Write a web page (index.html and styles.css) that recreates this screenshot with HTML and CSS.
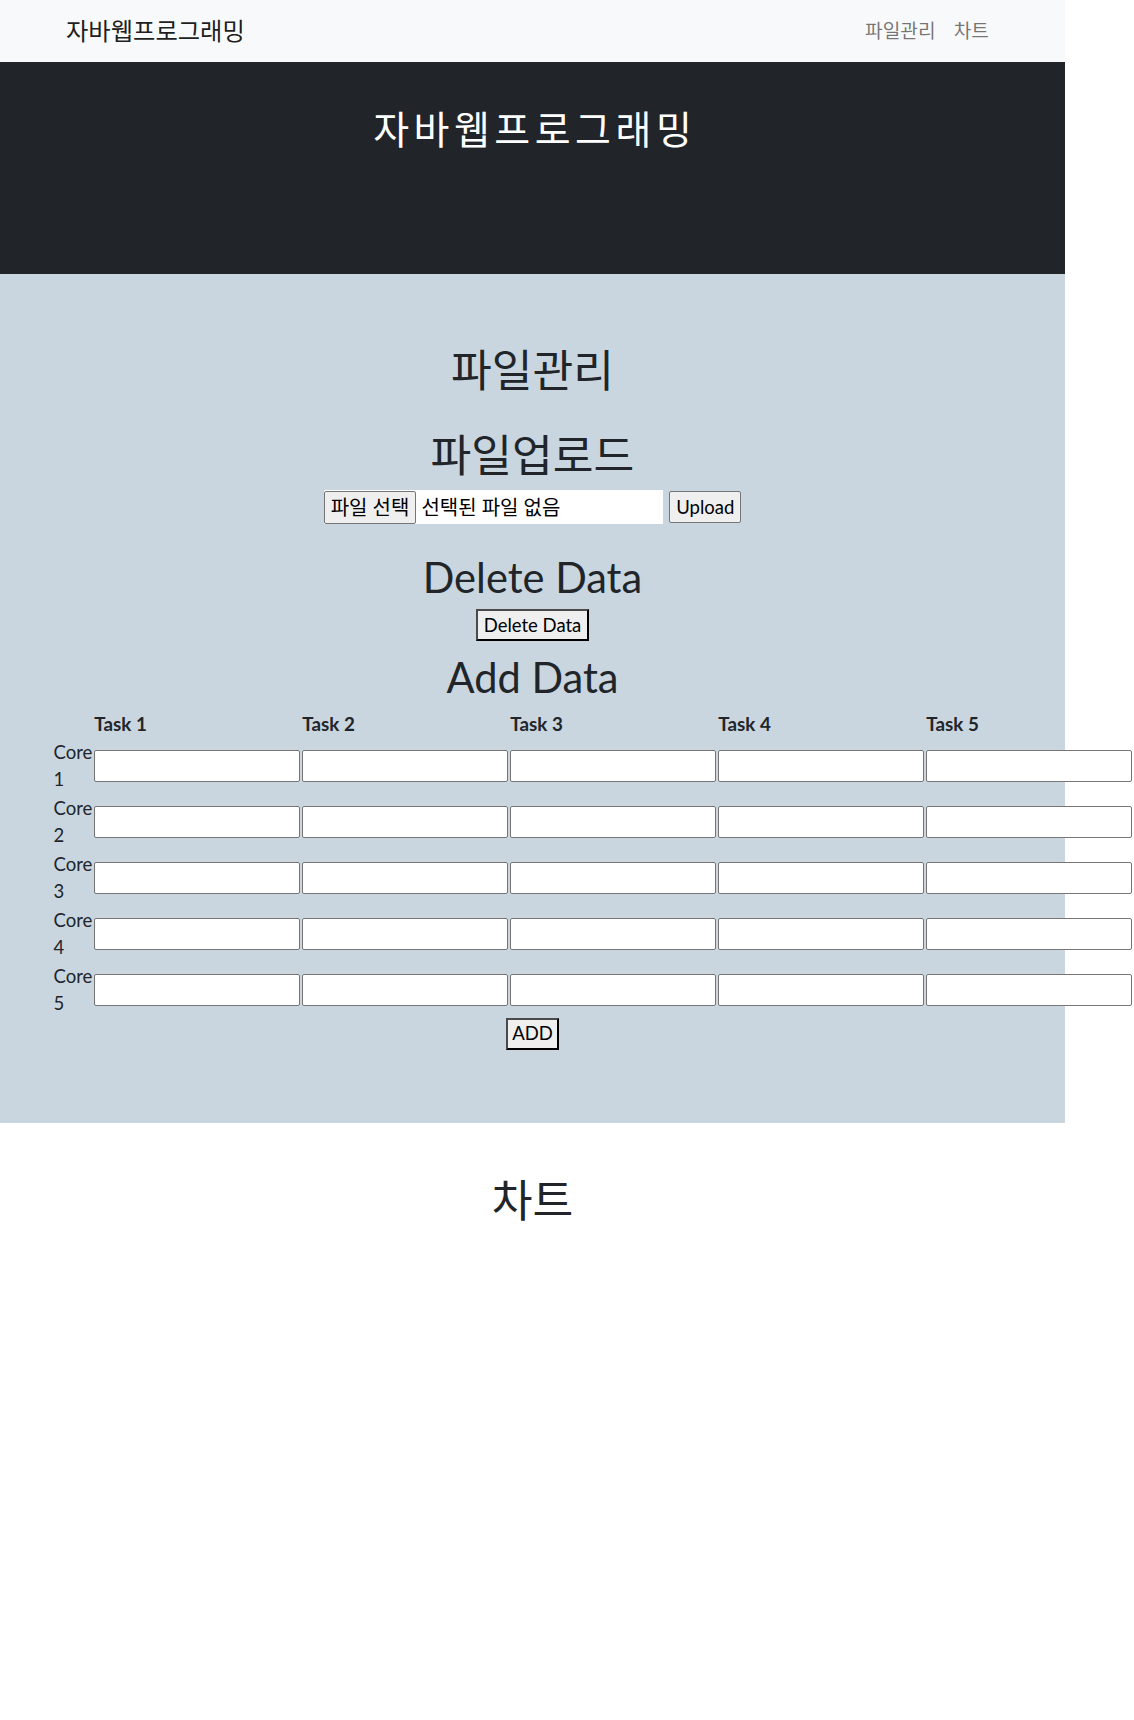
FILE: index.html
```html
<!DOCTYPE html>
<html lang="ko">
<head>
<meta charset="utf-8">
<title>자바웹프로그래밍</title>
<link rel="stylesheet" href="styles.css">
</head>
<body>
<div class="page">
  <nav class="navbar">
    <a class="brand" href="#">자바웹프로그래밍</a>
    <ul class="nav">
      <li><a class="nav-link" href="#file">파일관리</a></li>
      <li><a class="nav-link" href="#chart">차트</a></li>
    </ul>
  </nav>

  <header class="hero">
    <h1 class="hero-title">자바웹프로그래밍</h1>
  </header>

  <section class="files" id="file">
    <h1 class="heading">파일관리</h1>
    <h1 class="heading heading-upload">파일업로드</h1>
    <form class="upload-row">
      <div class="file-input"><button type="button" class="btn btn-file">파일 선택</button><span class="file-name">선택된 파일 없음</span></div>
      <button type="button" class="btn">Upload</button>
    </form>

    <h1 class="heading heading-latin heading-delete">Delete Data</h1>
    <div class="center center-delete"><button type="button" class="btn btn-strong">Delete Data</button></div>

    <h1 class="heading heading-latin heading-add">Add Data</h1>
    <table class="grid">
      <thead>
        <tr><th></th><th>Task 1</th><th>Task 2</th><th>Task 3</th><th>Task 4</th><th>Task 5</th></tr>
      </thead>
      <tbody>
        <tr><td class="label">Core 1</td><td><input type="text"></td><td><input type="text"></td><td><input type="text"></td><td><input type="text"></td><td><input type="text"></td></tr>
        <tr><td class="label">Core 2</td><td><input type="text"></td><td><input type="text"></td><td><input type="text"></td><td><input type="text"></td><td><input type="text"></td></tr>
        <tr><td class="label">Core 3</td><td><input type="text"></td><td><input type="text"></td><td><input type="text"></td><td><input type="text"></td><td><input type="text"></td></tr>
        <tr><td class="label">Core 4</td><td><input type="text"></td><td><input type="text"></td><td><input type="text"></td><td><input type="text"></td><td><input type="text"></td></tr>
        <tr><td class="label">Core 5</td><td><input type="text"></td><td><input type="text"></td><td><input type="text"></td><td><input type="text"></td><td><input type="text"></td></tr>
      </tbody>
    </table>
    <div class="center"><button type="button" class="btn btn-strong btn-add">ADD</button></div>
  </section>

  <section class="chart" id="chart">
    <h1 class="heading">차트</h1>
  </section>
</div>
</body>
</html>
```

FILE: styles.css
```css
* { box-sizing: border-box; }

html, body {
  margin: 0;
  padding: 0;
}

body {
  font-family: Lato, "Noto Sans CJK KR", sans-serif;
  font-size: 18.5px;
  line-height: 27px;
  color: #212529;
  background: #ffffff;
}

.page {
  width: 1065px;
}

/* navbar */
.navbar {
  height: 62px;
  background: #f8f9fa;
  display: flex;
  align-items: center;
  justify-content: space-between;
  padding: 0 76px 0 66px;
}

.brand {
  font-size: 24.3px;
  line-height: 30px;
  color: rgba(0, 0, 0, 0.9);
  text-decoration: none;
}

.nav {
  list-style: none;
  margin: 0;
  padding: 0;
  display: flex;
  gap: 18px;
}

.nav-link {
  font-size: 19.2px;
  line-height: 27px;
  color: rgba(0, 0, 0, 0.55);
  text-decoration: none;
}

/* hero */
.hero {
  background: #212529;
  padding: 43px 0 121px;
  text-align: center;
}

.hero-title {
  margin: 0;
  padding-left: 4.5px;
  color: #ffffff;
  font-size: 39px;
  letter-spacing: 4.5px;
  line-height: 48px;
  font-weight: 400;
}

/* file management section */
.files {
  background: #c9d6df;
  padding: 72px 0 73px;
}

.heading {
  margin: 0;
  font-size: 44.3px;
  line-height: 48px;
  font-weight: 400;
  text-align: center;
  color: #212529;
}

.heading-latin {
  font-size: 41.6px;
}

.heading-upload { margin-top: 37px; }
.heading-delete { margin-top: 29px; }
.heading-add { margin-top: 12px; }

.upload-row {
  margin: 11px 0 0;
  height: 34px;
  display: flex;
  justify-content: center;
  align-items: center;
  gap: 6.6px;
}

.file-input {
  width: 339px;
  height: 34px;
  background: #ffffff;
  display: flex;
  align-items: center;
}

.file-name {
  margin-left: 5px;
  font-size: 20px;
  color: #000000;
  white-space: nowrap;
}

.btn {
  font-family: inherit;
  font-size: 18.5px;
  line-height: 27px;
  height: 32px;
  padding: 0 6px;
  margin: 0;
  background: #efefef;
  color: #000000;
  border: 1px solid #767676;
  border-radius: 2px;
}

.btn-file {
  font-size: 20px;
  height: 33px;
}

.btn-strong {
  border-width: 2px;
  border-style: solid;
  border-color: #4a4a4a #000000 #000000 #4a4a4a;
  border-radius: 0;
}

.btn-add {
  padding: 0 4px;
}

.center {
  display: flex;
  justify-content: center;
}

.center-delete { margin-top: 8px; }

/* data grid */
.grid {
  border-collapse: collapse;
  margin: 7.5px 0 0 52.5px;
}

.grid th,
.grid td {
  padding: 1px;
  vertical-align: middle;
}

.grid th {
  text-align: left;
  font-weight: 700;
  font-size: 18.8px;
  line-height: 27px;
}

.grid .label {
  font-size: 18.5px;
  line-height: 27px;
  color: #212529;
}

.grid input {
  display: block;
  width: 206px;
  height: 32px;
  margin: 0;
  padding: 1px 2px;
  border: 1px solid #767676;
  border-radius: 2px;
  background: #ffffff;
  font: inherit;
}

/* chart section */
.chart {
  padding-top: 53px;
}
```
